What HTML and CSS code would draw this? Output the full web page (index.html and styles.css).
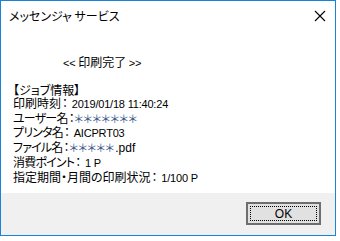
FILE: index.html
```html
<!DOCTYPE html>
<html lang="ja">
<head>
<meta charset="utf-8">
<link rel="stylesheet" href="styles.css">
</head>
<body>
<div class="window">
  <div class="titlebar">
    <span class="title">メッセンジャ サービス</span>
    <svg class="close" width="12" height="12" viewBox="0 0 12 12"><path d="M1 1L11 11M11 1L1 11" stroke="#000" stroke-width="1.1"/></svg>
  </div>
  <div class="content">
    <div class="banner"><span class="lat">&lt;&lt;</span> 印刷完了 <span class="lat">&gt;&gt;</span></div>
    <div class="info">
      <div class="line">【ジョブ情報】</div>
      <div class="line">印刷時刻<span class="c">：</span> <span class="lat">2019/01/18 11:40:24</span></div>
      <div class="line"><span class="k">ユーザー名</span><span class="c">：</span> <span class="ast">＊＊＊＊＊＊＊</span></div>
      <div class="line"><span class="k">プリンタ名</span><span class="c">：</span> <span class="lat">AICPRT03</span></div>
      <div class="line"><span class="k">ファイル名</span><span class="c">：</span> <span class="ast">＊＊＊＊＊</span><span class="lat big">.pdf</span></div>
      <div class="line"><span class="k">消費ポイント</span><span class="c">：</span> <span class="lat">1 P</span></div>
      <div class="line">指定期間・月間の印刷状況<span class="c">：</span> <span class="lat">1/100 P</span></div>
    </div>
  </div>
  <div class="footer">
    <button class="ok"><span class="focus">OK</span></button>
  </div>
</div>
</body>
</html>
```
FILE: styles.css
```css
html, body {
  margin: 0;
  padding: 0;
  background: #ffffff;
}
body {
  font-family: "Noto Sans CJK JP", sans-serif;
  font-size: 12px;
  color: #000;
  font-feature-settings: "palt";
}
.window {
  width: 334px;
  height: 234px;
  border: 1px solid #1883d7;
  display: flex;
  flex-direction: column;
  background: #fff;
}
.titlebar {
  height: 30px;
  display: flex;
  align-items: center;
  justify-content: space-between;
  padding: 0 9px 0 8px;
}
.title {
  font-size: 12px;
  line-height: 14px;
}
.close {
  display: block;
}
.content {
  flex: 1;
  padding: 24px 0 0 12px;
}
.banner {
  line-height: 13px;
  margin-left: 50px;
}
.info {
  margin-top: 13px;
}
.line {
  line-height: 13px;
  white-space: nowrap;
}
.k {
  letter-spacing: -0.8px;
}
.c {
  margin-left: 1px;
  margin-right: 1px;
}
.lat {
  font-family: "Liberation Sans", sans-serif;
  font-size: 11px;
  letter-spacing: -0.2px;
}
.lat.big {
  font-size: 12px;
  letter-spacing: 0;
}
.ast {
  color: #34548a;
  font-size: 11px;
  letter-spacing: -2px;
  margin-left: -5px;
  margin-right: 2px;
  line-height: 13px;
  font-feature-settings: normal;
}
.footer {
  height: 42px;
  background: #f0f0f0;
  display: flex;
  justify-content: flex-end;
  align-items: flex-start;
  padding: 9px 14px 0 0;
  box-sizing: border-box;
}
.ok {
  width: 75px;
  height: 23px;
  border: 2px solid #6e6e6e;
  background: #e1e1e1;
  padding: 2px;
  margin: 0;
  box-sizing: border-box;
  display: flex;
}
.focus {
  flex: 1;
  border: 1px dotted #000;
  display: flex;
  align-items: center;
  justify-content: center;
  font-family: "Liberation Sans", sans-serif;
  font-size: 12px;
  color: #000;
}
```
